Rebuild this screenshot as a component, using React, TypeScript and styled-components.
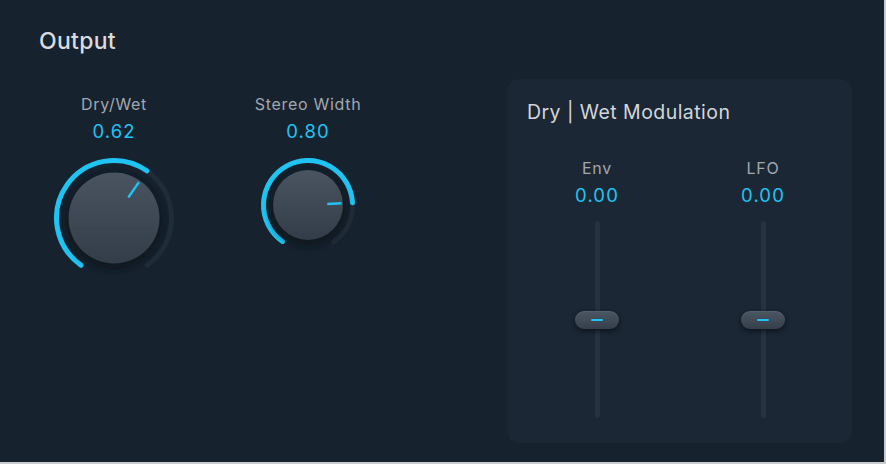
import React from "react";
import styled, { createGlobalStyle } from "styled-components";

const Global = createGlobalStyle`
  html, body { margin: 0; padding: 0; background: #c9cbce; }
  body { width: 886px; height: 464px; overflow: hidden; }
  #root { width: 886px; height: 464px; }
`;

const Root = styled.div`
  width: 884px;
  height: 462px;
  background: #17222f;
  display: flex;
  font-family: Inter, "Noto Sans", sans-serif;
  -webkit-font-smoothing: antialiased;
`;

const LeftColumn = styled.section`
  width: 507px;
  padding: 28px 0 0 39px;
  box-sizing: border-box;
  display: flex;
  flex-direction: column;
`;

const Title = styled.h1`
  margin: 0;
  font-size: 23px;
  line-height: 26px;
  font-weight: 500;
  color: #d9dcdf;
  letter-spacing: 0.3px;
`;

const KnobRow = styled.div`
  display: flex;
  gap: 64px;
  margin: 40px 0 0 10px;
`;

const Unit = styled.div<{ $w: number }>`
  width: ${(p) => p.$w}px;
  display: flex;
  flex-direction: column;
  align-items: center;
`;

const Label = styled.div`
  font-size: 16px;
  line-height: 20px;
  color: #a2a7ad;
  letter-spacing: 0.7px;
`;

const Value = styled.div`
  margin-top: 6px;
  font-size: 18.5px;
  line-height: 22px;
  color: #1fc4f2;
  letter-spacing: 1.1px;
`;

const KnobSvg = styled.svg`
  margin-top: 12px;
  display: block;
  overflow: visible;
`;

const Panel = styled.section`
  margin-top: 79px;
  width: 345px;
  height: 364px;
  border-radius: 12px;
  background: #1b2735;
  box-sizing: border-box;
  padding: 21px 0 0 20px;
  display: flex;
  flex-direction: column;
`;

const PanelTitle = styled.h2`
  margin: 0;
  font-size: 19.5px;
  line-height: 24px;
  font-weight: 400;
  color: #d3d6d9;
  letter-spacing: 0.45px;
`;

const SliderRow = styled.div`
  display: flex;
  gap: 46px;
  margin: 34px 0 0 10px;
`;

const SliderColumn = styled.div`
  width: 120px;
  display: flex;
  flex-direction: column;
  align-items: center;
`;

const Track = styled.div`
  position: relative;
  margin-top: 15px;
  width: 5px;
  height: 197px;
  border-radius: 3px;
  background: #253241;
`;

const Thumb = styled.div`
  position: absolute;
  left: 50%;
  width: 44px;
  height: 18px;
  margin-left: -22px;
  margin-top: -9px;
  border-radius: 9px;
  background: linear-gradient(#4c5764, #353f4b);
  box-shadow: 0 2px 5px rgba(5, 10, 16, 0.7), inset 0 1px 0 rgba(255, 255, 255, 0.06);
  display: flex;
  align-items: center;
  justify-content: center;
  &::after {
    content: "";
    width: 12px;
    height: 2px;
    border-radius: 1px;
    background: #1fc4f2;
  }
`;

const START = 235;
const SWEEP = 290;

function polar(c: number, r: number, deg: number) {
  const a = (deg * Math.PI) / 180;
  return [c + r * Math.cos(a), c - r * Math.sin(a)];
}

function arc(c: number, r: number, from: number, to: number) {
  const [x1, y1] = polar(c, r, from);
  const [x2, y2] = polar(c, r, to);
  const large = from - to > 180 ? 1 : 0;
  return `M ${x1} ${y1} A ${r} ${r} 0 ${large} 1 ${x2} ${y2}`;
}

function Knob({ id, outer, body, value }: { id: string; outer: number; body: number; value: number }) {
  const size = outer * 2 + 8;
  const c = size / 2;
  const r = outer - 2.5;
  const valDeg = START - value * SWEEP;
  const [ix1, iy1] = polar(c, body * 0.55, valDeg);
  const [ix2, iy2] = polar(c, body * 0.96, valDeg);
  return (
    <KnobSvg width={size} height={size} viewBox={`0 0 ${size} ${size}`}>
      <defs>
        <linearGradient id={`g-${id}`} x1="0" y1="0" x2="0" y2="1">
          <stop offset="0" stopColor="#4a5460" />
          <stop offset="1" stopColor="#333d49" />
        </linearGradient>
        <filter id={`s-${id}`} x="-50%" y="-50%" width="200%" height="200%">
          <feGaussianBlur stdDeviation="3" />
        </filter>
      </defs>
      <path d={arc(c, r, START, START - SWEEP)} stroke="#212c39" strokeWidth="5" fill="none" strokeLinecap="round" />
      <path d={arc(c, r, START, valDeg)} stroke="#1fc4f2" strokeWidth="5" fill="none" strokeLinecap="round" />
      <circle cx={c} cy={c + 3} r={body + 3} fill="#0d141c" opacity="0.85" filter={`url(#s-${id})`} />
      <circle cx={c} cy={c} r={body} fill={`url(#g-${id})`} />
      <line x1={ix1} y1={iy1} x2={ix2} y2={iy2} stroke="#1fc4f2" strokeWidth="2.4" strokeLinecap="butt" />
    </KnobSvg>
  );
}

function Slider({ label, value, pos }: { label: string; value: string; pos: number }) {
  return (
    <SliderColumn>
      <Label>{label}</Label>
      <Value>{value}</Value>
      <Track>
        <Thumb style={{ top: `${pos * 100}%` }} />
      </Track>
    </SliderColumn>
  );
}

export default function App() {
  return (
    <>
      <Global />
      <Root>
        <LeftColumn>
          <Title>Output</Title>
          <KnobRow>
            <Unit $w={130}>
              <Label>Dry/Wet</Label>
              <Value>0.62</Value>
              <Knob id="dw" outer={60} body={45.5} value={0.62} />
            </Unit>
            <Unit $w={130}>
              <Label>Stereo Width</Label>
              <Value>0.80</Value>
              <Knob id="sw" outer={47} body={35} value={0.8} />
            </Unit>
          </KnobRow>
        </LeftColumn>
        <Panel>
          <PanelTitle>Dry | Wet Modulation</PanelTitle>
          <SliderRow>
            <Slider label="Env" value="0.00" pos={0.5} />
            <Slider label="LFO" value="0.00" pos={0.5} />
          </SliderRow>
        </Panel>
      </Root>
    </>
  );
}
